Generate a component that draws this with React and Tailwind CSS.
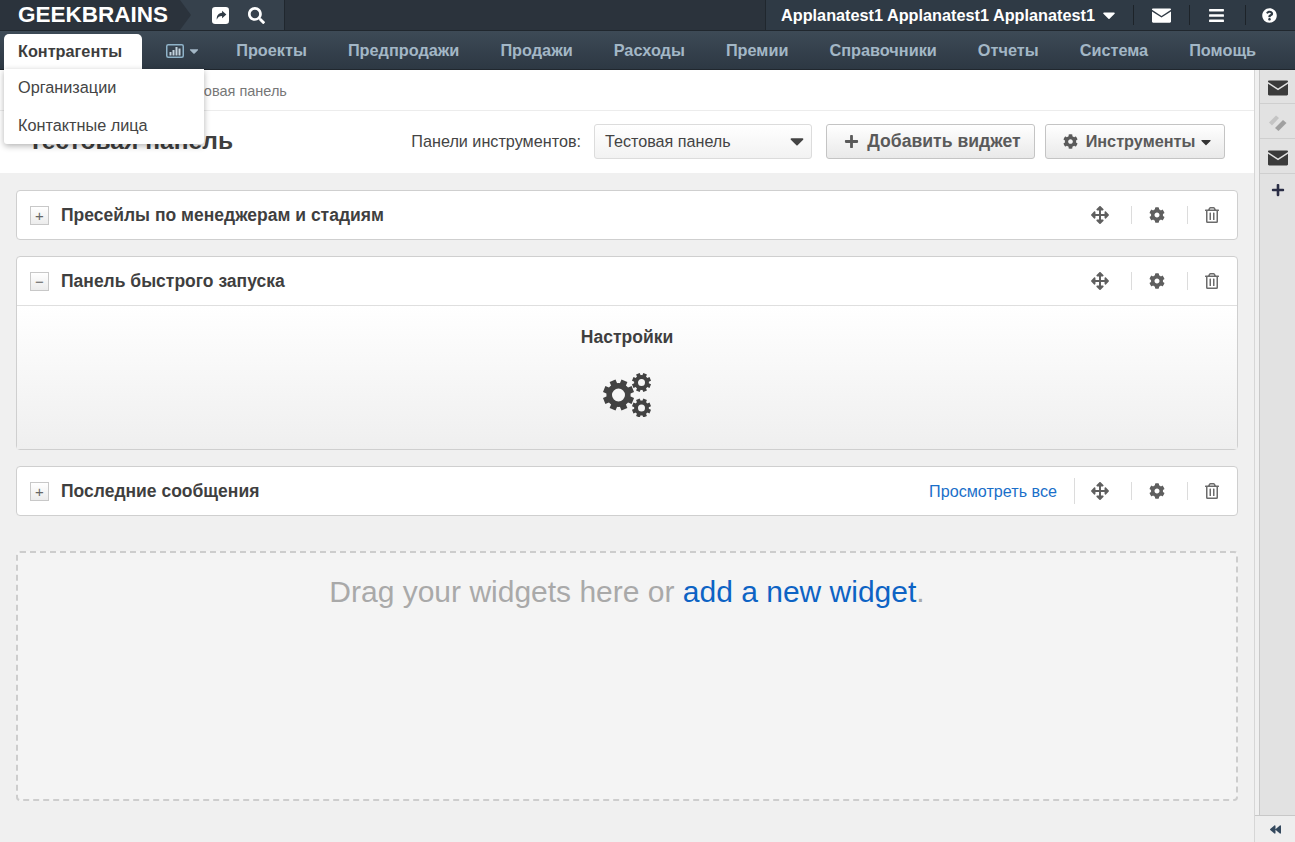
import React from "react";
import {
  FaSearch,
  FaBars,
  FaQuestionCircle,
  FaCog,
  FaArrowsAlt,
  FaRegTrashAlt,
  FaPlus,
  FaBackward,
  FaCaretDown,
} from "react-icons/fa";

const navItems = ["Проекты", "Предпродажи", "Продажи", "Расходы", "Премии", "Справочники", "Отчеты", "Система", "Помощь"];

const Envelope = ({ className }) => (
  <svg viewBox="0 0 20 15" className={className} fill="currentColor">
    <path d="M0 1.2C0 .5.5 0 1.2 0h17.6c.7 0 1.2.5 1.2 1.2v.3L10 8 0 1.5z" />
    <path d="M0 3.2 10 9.7l10-6.5v10.6c0 .7-.5 1.2-1.2 1.2H1.2C.5 15 0 14.500 0 13.800z" />
  </svg>
);

const ShareIcon = () => (
  <svg viewBox="0 0 16 16" className="h-[17px] w-[17px]">
    <rect width="16" height="16" rx="3" fill="#fff" />
    <path d="M9.500 3.500 13.500 7l-4 3.500V8.500C7 8.500 5.500 9.500 4.500 12c-.3-3.800 1.500-6 5-6.500z" fill="#2f3a45" />
  </svg>
);

const ChartIcon = () => (
  <svg viewBox="0 0 18 14" className="h-[14px] w-[18px]">
    <rect x="0.750" y="0.750" width="16.500" height="12.500" rx="1.500" fill="none" stroke="#8fb3c9" strokeWidth="1.500" />
    <path d="M3.500 8h2v3.500h-2zM6.500 6h2v5.500h-2zM9.500 3h2v8.500h-2zM12.500 4.500h2v7h-2z" fill="#c3d3de" />
  </svg>
);

// teeth + ring, one gear of the settings icon
const Gear = ({ cx, cy, r, hole, teeth }) => {
  const ring = (r * 0.78 + hole) / 2;
  const toothW = (r * 2 * 3.14) / teeth / 1.9;
  return (
    <g>
      {Array.from({ length: teeth }, (_, i) => (
        <rect
          key={i}
          x={cx - toothW / 2}
          y={cy - r}
          width={toothW}
          height={r * 0.4}
          transform={`rotate(${(360 / teeth) * i + 180 / teeth} ${cx} ${cy})`}
        />
      ))}
      <circle cx={cx} cy={cy} r={ring} fill="none" stroke="currentColor" strokeWidth={r * 0.78 - hole} />
    </g>
  );
};

const CogsIcon = ({ className }) => (
  <svg viewBox="0 0 49 44" className={className} fill="currentColor">
    <Gear cx={15.5} cy={22} r={15.5} hole={6.500} teeth={8} />
    <Gear cx={38.5} cy={9.500} r={9.500} hole={3.500} teeth={8} />
    <Gear cx={38.5} cy={35} r={9.500} hole={3.500} teeth={8} />
  </svg>
);

const Sep = ({ className }) => <span className={`w-px bg-[#dcdcdc] ${className}`} />;

const PanelHeader = ({ title, open, link }) => (
  <div className="flex h-[48px] items-center pl-[13px] pr-[16px]">
    <span className="flex h-[19px] w-[19px] items-center justify-center border border-[#c8c8c8] bg-gradient-to-b from-white to-[#ececec] text-[15px] leading-none text-[#666]">
      {open ? "−" : "+"}
    </span>
    <span className="ml-[12px] text-[17.500px] font-bold text-[#3f3f3f]">{title}</span>
    <div className="ml-auto flex items-center text-[#5f5f5f]">
      {link && (
        <>
          <a href="#" className="mr-[17px] text-[16.150px] text-[#1a6fc9]">
            {link}
          </a>
          <Sep className="mr-[16px] h-[26px]" />
        </>
      )}
      <FaArrowsAlt className="text-[18px]" />
      <Sep className="ml-[22px] h-[18px]" />
      <FaCog className="ml-[17px] text-[16px]" />
      <Sep className="ml-[22px] h-[18px]" />
      <FaRegTrashAlt className="ml-[16px] mr-[1px] text-[16px] text-[#6b6b6b]" />
    </div>
  </div>
);

const App = () => {
  return (
    <div className="relative flex h-[842px] w-[1295px] flex-col overflow-hidden bg-[#f0f0f0] font-['Liberation_Sans',Arial,sans-serif] text-[#333]">
      {/* top bar */}
      <div className="flex h-[31px] items-stretch border-b border-[#20272e] bg-[#2b333c] text-white">
        <div className="relative flex w-[180px] items-center pl-[18px] text-[22.500px] font-bold leading-none">
          GEEKBRAINS
          <span className="absolute right-[-11px] top-0 z-10 h-0 w-0 border-y-[15px] border-l-[11px] border-y-transparent border-l-[#2b333c]" />
        </div>
        <div className="flex w-[105px] items-center border-r border-[#20272e] bg-[#36414c] pl-[32px]">
          <ShareIcon />
          <FaSearch className="ml-[19px] text-[17px]" />
        </div>
        <div className="ml-auto flex w-[530px] items-center border-l border-[#20272e] bg-[#2f3a45] pl-[15px]">
          <span className="text-[16.250px] font-bold">Applanatest1 Applanatest1 Applanatest1</span>
          <FaCaretDown className="ml-[4px] text-[20px]" />
          <span className="ml-[14px] h-[20px] w-px bg-[#1d2329]" />
          <Envelope className="ml-[18px] h-[15px] w-[19px]" />
          <span className="ml-[18px] h-[20px] w-px bg-[#1d2329]" />
          <FaBars className="ml-[18px] text-[17px]" />
          <span className="ml-[20px] h-[20px] w-px bg-[#1d2329]" />
          <FaQuestionCircle className="ml-[16px] text-[15px]" />
        </div>
      </div>

      {/* nav */}
      <div className="flex h-[39px] items-end border-b border-[#20272e] bg-gradient-to-b from-[#3d4a56] to-[#2d3843] pl-[4px]">
        <div className="flex h-[35px] w-[138px] items-center rounded-t-[5px] bg-white pl-[14px] text-[16.250px] font-bold text-[#3d3d3d]">
          Контрагенты
        </div>
        <div className="flex h-[35px] items-center pb-[2px] pl-[24px] text-[16.300px] font-bold text-[#a3b7c6]">
          <span className="flex w-[70.200px] items-center gap-[3px]">
            <ChartIcon />
            <FaCaretDown className="text-[14px]" />
          </span>
          <div className="flex gap-[41px]">
            {navItems.map((item) => (
              <span key={item}>{item}</span>
            ))}
          </div>
        </div>
      </div>

      {/* dropdown */}
      <div className="absolute left-[4px] top-[69px] z-20 flex h-[75px] w-[200px] flex-col rounded-b-[3px] bg-white pl-[14px] text-[16.250px] text-[#444] shadow-[0_2px_6px_rgba(0,0,0,0.3)]">
        <span className="flex h-[38px] items-center pb-[2px]">Организации</span>
        <span className="flex h-[38px] items-center">Контактные лица</span>
      </div>

      <div className="flex min-h-0 flex-1">
        <div className="flex-1">
          <div className="flex h-[41px] items-center border-b border-[#ececec] bg-white pl-[174px] pt-[4px] text-[14.500px] text-[#777]">
            Тестовая панель
          </div>
          <div className="flex h-[62px] items-center bg-white pb-[1px] pl-[28px] pr-[29px]">
            <span className="text-[24.600px] font-bold text-[#3f3f3f]">Тестовая панель</span>
            <span className="ml-auto text-[16.200px] text-[#444]">Панели инструментов:</span>
            <div className="ml-[13px] flex h-[35px] w-[218px] items-center justify-between rounded-[3px] border border-[#dcdcdc] bg-gradient-to-b from-white to-[#f2f2f2] pl-[10px] pr-[3px] text-[16.150px] text-[#444]">
              Тестовая панель
              <FaCaretDown className="mb-[2px] text-[22px] text-[#444]" />
            </div>
            <button className="ml-[14px] flex h-[35px] w-[209px] items-center justify-center rounded-[3px] border border-[#c4c4c4] bg-gradient-to-b from-white to-[#e9e9e9] pl-[4px] text-[17.600px] font-bold text-[#5a5a5a]">
              <FaPlus className="mr-[8px] text-[15px]" />
              Добавить виджет
            </button>
            <button className="ml-[10px] flex h-[35px] w-[180px] items-center justify-center rounded-[3px] border border-[#c4c4c4] bg-gradient-to-b from-white to-[#e9e9e9] pl-[7px] text-[16.250px] font-bold text-[#5a5a5a]">
              <FaCog className="mr-[8px] text-[15px]" />
              Инструменты
              <FaCaretDown className="ml-[3px] text-[16px] text-[#333]" />
            </button>
          </div>

          <div className="flex flex-col pl-[16px] pr-[16px] pt-[17px]">
            <div className="h-[50px] rounded-[4px] border border-[#cfcfcf] bg-white">
              <PanelHeader title="Пресейлы по менеджерам и стадиям" />
            </div>
            <div className="mt-[16px] h-[194px] rounded-[4px] border border-[#cfcfcf] bg-white">
              <PanelHeader title="Панель быстрого запуска" open />
              <div className="flex h-[144px] flex-col items-center border-t border-[#dfdfdf] bg-gradient-to-b from-white to-[#efefef] pt-[18px]">
                <span className="text-[17.500px] font-bold text-[#3f3f3f]">Настройки</span>
                <CogsIcon className="mt-[23px] h-[44px] w-[49px] text-[#424242]" />
              </div>
            </div>
            <div className="mt-[16px] h-[50px] rounded-[4px] border border-[#cfcfcf] bg-white">
              <PanelHeader title="Последние сообщения" link="Просмотреть все" />
            </div>
            <div className="mt-[35px] flex h-[250px] justify-center rounded-[4px] border-2 border-dashed border-[#cdcdcd] bg-[#f4f4f4] pt-[16px] text-[30px] text-[#a9a9a9]">
              <span>
                Drag your widgets here or <a href="#" className="text-[#0d63c4]">add a new widget</a>.
              </span>
            </div>
          </div>
        </div>

        {/* right sidebar */}
        <div className="flex w-[41px] flex-col border-l border-[#d6d6d6]">
          <div className="flex flex-1 pl-[4px]">
            <div className="flex flex-1 flex-col border-l border-[#c8c8c8] bg-[#e2e2e2] text-[#3b3b3b]">
              <div className="flex h-[34px] items-center justify-center border-b border-[#cfcfcf] pt-[3px]">
                <Envelope className="h-[16px] w-[20px]" />
              </div>
              <div className="flex h-[35px] items-center justify-center border-b border-[#cfcfcf] pt-[3px]">
                <svg viewBox="0 0 20 20" className="h-[20px] w-[20px]">
                  <path d="M1 9.500 8 2.500l3 2.500-7 7.500z" fill="#c4c4c4" />
                  <path d="M7 15l8-8 3.500 3-8 8z" fill="#a0a0a0" />
                </svg>
              </div>
              <div className="flex h-[35px] items-center justify-center border-b border-[#cfcfcf] pt-[3px]">
                <Envelope className="h-[16px] w-[20px]" />
              </div>
              <div className="flex h-[32px] items-center justify-center text-[#2a2d45]">
                <FaPlus className="text-[14px]" />
              </div>
            </div>
          </div>
          <div className="flex h-[27px] items-center justify-center border-t border-[#c8c8c8] bg-[#eeeeee] text-[#34495e]">
            <FaBackward className="text-[11px]" />
          </div>
        </div>
      </div>
    </div>
  );
};

export default App;
